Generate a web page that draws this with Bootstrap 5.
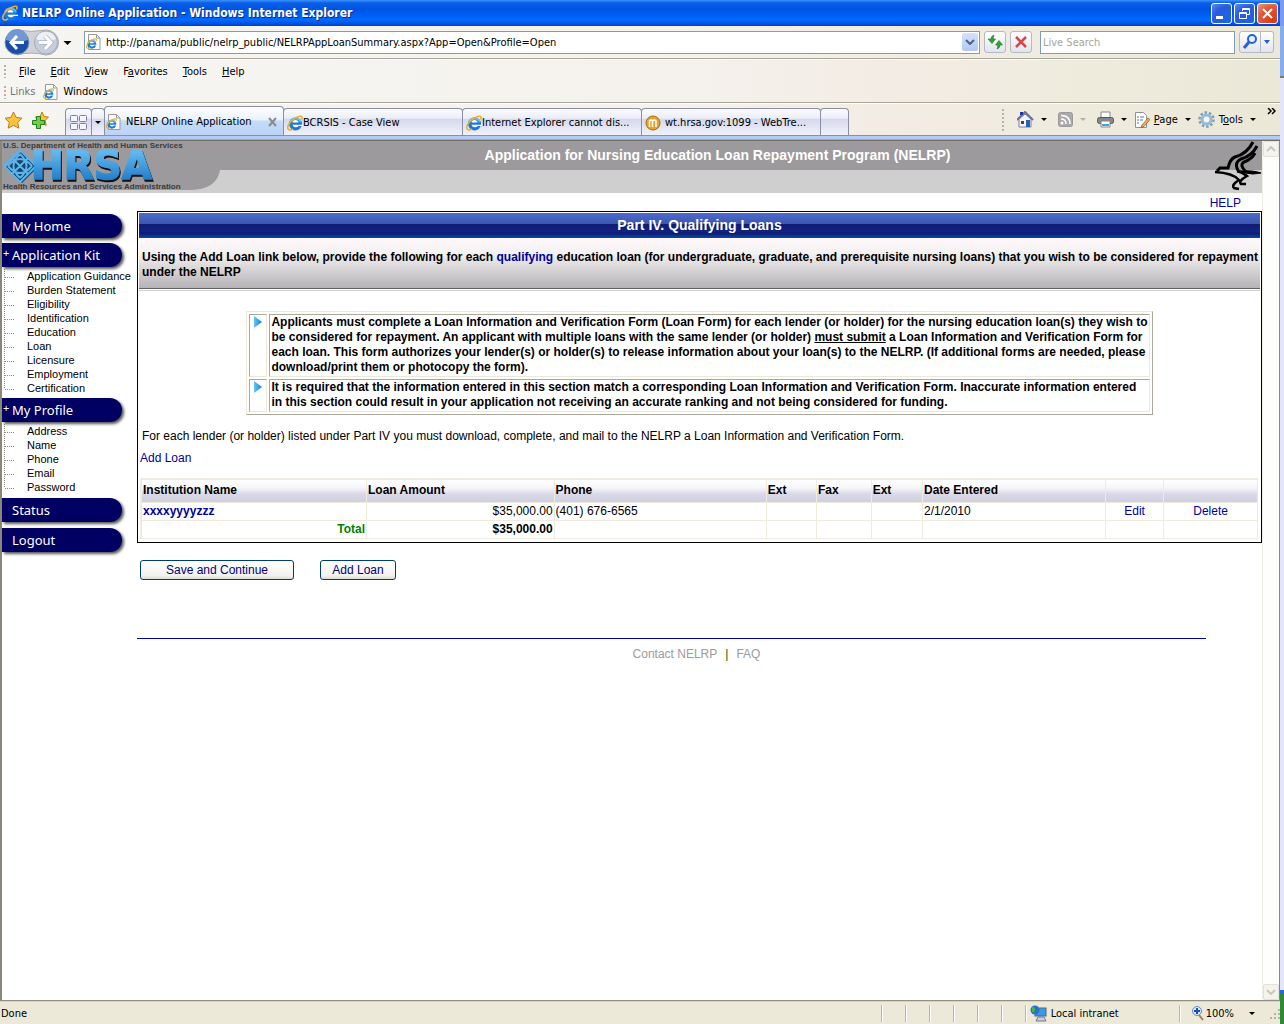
<!DOCTYPE html>
<html lang="en"><head><meta charset="utf-8"><title>NELRP Online Application</title>
<link rel="stylesheet" href="https://cdn.jsdelivr.net/npm/bootstrap@5.3.0/dist/css/bootstrap.min.css">
<style>
:root{--ui:"DejaVu Sans Condensed","DejaVu Sans",Tahoma,sans-serif}
body{font:12px/15px "Liberation Sans",Arial,sans-serif;color:#000;background:#c7d5f5}
a{text-decoration:none;color:#00009c}
button,input{font:inherit}
.win{min-width:0;background:#efebde}
.edge{width:4px;background:linear-gradient(#7d9be8 26px,#84aef0 26px 76px,#7b7b6b 76px 78px,#e4e4fa 78px calc(100% - 34px),#2a66dd calc(100% - 34px) calc(100% - 30px),#2f8a38 calc(100% - 30px))}
.ui{font:11px/14px var(--ui)}
.titlebar{height:26px;background:linear-gradient(#3a93ff 0,#0a5fe8 3px,#0054e3 9px,#0060f8 16px,#006aff 20px,#0050e0 24px,#003dc0);color:#fff;font:bold 12px/26px var(--ui);padding:0 2px;text-shadow:1px 1px #0a2a80}
.wb{width:21px;height:21px;border:1px solid #fff;border-radius:3px;padding:0;background:radial-gradient(circle at 80% 85%,#1d63e8,#2a5bd8 60%,#5b8cf5)}
.wb.red{background:radial-gradient(circle at 80% 85%,#d83c12,#e0583a 60%,#f09a80)}
.wb svg,.ib svg{display:block}
.chrome{background:linear-gradient(90deg,#f6f5f1 0,#f5f2ee 50%,#f3ece4 70%,#eeebdd 85%,#ece8d8)}
.addr{height:33px;border-bottom:1px solid #aaa698;padding:0 6px 0 4px}
.field{height:23px;border:1px solid #7f9db9;background:#fff;border-radius:0;padding:0 1px 0 4px}
.field input{border:0;outline:0;padding:2px 0 0;background:transparent;min-width:0}
.field input::placeholder{color:#a5a59a;opacity:1}
.place{padding-left:1px}
.live{width:195px;padding-left:2px}
.ib{height:22px;border:1px solid #b4b8c8;border-radius:3px;background:linear-gradient(#fff,#e3e4ec);padding:0}
.drop{width:16px;height:18px;border:0;border-radius:2px;background:linear-gradient(#d5e2fd,#b2c7f5);padding:0}
.menus{height:44px;border-bottom:1px solid #aaa698;border-top:1px solid #fff;padding:4px 4px 0}
.menubar{height:15px;margin-bottom:5px}
.menubar span{gap:15px;margin-left:9px}
.menus a,.tools a{color:#000}
.grip{width:2px;height:13px;background:repeating-linear-gradient(#b5b2a6 0 2px,transparent 2px 4px)}
.tabs{height:33px;border-top:1px solid #fff;border-bottom:1px solid #8b8fa8}
.favs{width:66px;gap:9px}
.tabx{height:27px;border:1px solid #8b8fa6;border-bottom:0;border-radius:4px 4px 0 0;background:linear-gradient(#fbfbfe 0,#eceef8 35%,#d6d9ec 40%,#f0f1f9);padding:2px 3px 0;width:180px;margin-left:-1px;color:#000;white-space:nowrap}
.tabx.cur{height:29px;padding-left:1px;background:linear-gradient(#fff 0,#e9f2fd 45%,#c3dcf8 50%,#bcd3f6)}
.tabx.sm{width:29px}.tabx.q{width:27px;padding:0 2px}.tabx.arr{width:14px;padding:0}
.caret{width:0;height:0;border:3px solid transparent;border-top-color:#000;border-bottom:0;flex:none}
.underbar{height:5px;background:linear-gradient(#b5cbf3 0 3px,#aca899 3px 4px,#716f64 4px)}
.tools{gap:7px}
.tools .grip{height:22px;margin-right:6px}
.tools a{margin-left:-3px}
.view{border-left:2px solid #8a8779;background:#fff}
.scroll{width:17px;background:#fefefb;border-left:1px solid #eeede5}
.scroll button{width:16px;height:16px;border:1px solid #e4e2d6;border-radius:2px;background:#f4f3ee;padding:0}
.rim{width:3px;background:#ece9d8;border-right:1px solid #8a8779}
.status{height:24px;border-top:1px solid #918f84;background:#ece9d8;box-shadow:inset 0 1px #d8d4c4;padding:2px 0 0 1px}
.cell{width:24px;height:17px;border-left:1px solid #b9b6a8;box-shadow:inset 1px 0 #fff}
.zone span{width:128px}
.zoomer{padding-left:11px}
.zoomer .caret{margin:0 15px}
.head{height:52px;background:linear-gradient(#9c9a9c 29px,#cecfce 29px)}
.logo{width:218px}
.word{filter:drop-shadow(1px 2px 0 #111)}
.head h1{font:bold 14px/29px "Liberation Sans",Arial,sans-serif;color:#fff;margin:0}
.side{width:135px;padding-top:21px}
.pill{display:block;width:120px;height:24px;margin-bottom:5px;background:#000063;color:#fff;border-radius:0 12px 12px 0;box-shadow:2px 2px 3px #555;font:13px/24px "Noto Sans","Open Sans",sans-serif;padding-left:10px;position:relative}
.pill.end{margin-bottom:6px}
.pill span{position:absolute;left:1px;top:-2px;font-size:11px}
.tree{margin:-3px 0 3px;padding:0;list-style:none;font-size:11px;line-height:14px}
.tree.end{margin-bottom:4px}
.tree a{color:#000;display:block;height:14px;padding-left:25px;white-space:nowrap;background:repeating-linear-gradient(90deg,#8d8a80 0 1px,transparent 1px 2px) 3px 8px/10px 1px no-repeat,repeating-linear-gradient(#8d8a80 0 1px,transparent 1px 2px) 2px 0/1px 14px no-repeat}
.tree li:last-child a{background-size:10px 1px,1px 8px}
.help{height:18px;line-height:18px;padding:1px 21px 0 0}
.panel{border:1px solid #000;padding:1px}
.panel h2{margin:0;height:25px;font:bold 14px/24px "Liberation Sans",Arial,sans-serif;color:#fff;text-align:center;background:linear-gradient(#4b6bd0 0,#3d56ac 11px,#101c73 11px,#122383 19px,#0a1a70 20px,#0e46a8 25px)}
.intro{height:53px;font-weight:700;padding:12px 0 0 3px;background:linear-gradient(#fff9fb 0,#f4f1f3 15px,#b5b3b5 50px,#636163 50px 51px,#fff 51px 52px,#cecfce 52px)}
.notes{max-width:100%;margin:20px auto 14px;border:1px solid #ece9d8;border-right-color:#aca899;border-bottom-color:#aca899;border-collapse:separate;border-spacing:2px;font-weight:700}
.notes td{border:1px solid #aca899;border-right-color:#ece9d8;border-bottom-color:#ece9d8;padding:0 1px 1px;vertical-align:top}
.notes td:first-child{padding:1px 4px}
.notes svg{display:block}
.say{margin:0;padding:0 0 3px 3px}
.addlink{margin:0 0 12px 1px}
.loans{width:calc(100% - 3px);margin:0 0 2px 1px;table-layout:fixed;border:2px solid #efebe0;border-right:1px solid #aca899;border-bottom:1px solid #aca899;border-collapse:collapse}
.loans th{height:23px;background:linear-gradient(#fff 0,#f6f6fa 35%,#d8d8e6 65%,#cfcfe0);padding:0 1px}
.loans td{height:18px;padding:0 1px}
.loans th,.loans td{border:1px solid #efebde;line-height:17px}
.loans .sum{color:#008000;font-weight:700}
.acts{padding:17px 3px 0;gap:26px}
.xp{height:20px;border:1px solid #003c74;border-radius:3px;background:linear-gradient(#fff,#f3f2ee 80%,#dfdcd2);color:#00007b;padding:0;line-height:16px;width:76px}
.xp.wide{width:154px}
.rule{height:1px;margin:58px 56px 0 0;background:#00009c}
.foot{margin-right:56px;padding:8px 0 0 50px;height:30px}
.foot a{color:#9c9a9c}
.foot span{margin:0 8px;color:#006400}
</style></head><body>
<svg width="0" height="0" class="position-absolute"><defs>
<linearGradient id="ig" x1="0" y1="0" x2="0" y2="1"><stop offset="0" stop-color="#5cb8f5"/><stop offset="1" stop-color="#0d5cc0"/></linearGradient>
<linearGradient id="hg" x1="0" y1="0" x2="0" y2="1"><stop offset=".2" stop-color="#62b8ee"/><stop offset=".8" stop-color="#2480cc"/></linearGradient>
<linearGradient id="tg" x1="0" y1="0" x2="1" y2="0"><stop offset="0" stop-color="#66c8ee"/><stop offset="1" stop-color="#0a80e8"/></linearGradient>
<symbol id="ie" viewBox="0 0 16 16"><circle cx="8.500" cy="9" r="6.500" fill="#1b78d8"/><path d="M3 7a6 6 0 0 1 11 0" fill="none" stroke="#62bdf6" stroke-width="2"/><path d="M5.500 7.500a3 2.500 0 0 1 6 0z" fill="#fff"/><path d="M5.500 9.800H16v1.200h-4.300a3.300 2.500 0 0 1-6.200-1.200z" fill="#fff"/><path d="M2 14.800C-1.500 13 3 6 8 3.200S16.500.3 14.600 4.500M2 14.800c1.500.5 3-.3 4-1" fill="none" stroke="#f0b01c" stroke-width="1.600"/></symbol>
<symbol id="doc" viewBox="0 0 16 16"><path d="M2.500.5h8l3.500 3.500v11.500H2.500z" fill="#fff" stroke="#9a9a9a"/><path d="M10.500.5V4H14" fill="none" stroke="#9a9a9a"/><svg x="0" y="4" width="11" height="11"><use href="#ie"/></svg></symbol>
<symbol id="tri" viewBox="0 0 8 12"><path d="M0 0l8 6-8 6z" fill="url(#tg)"/></symbol>
</defs></svg>
<div class="d-flex min-vh-100">
<div class="win flex-grow-1 d-flex flex-column">
<header class="titlebar d-flex align-items-center"><svg width="16" height="16" class="me-1"><use href="#ie"/></svg><span class="flex-grow-1">NELRP Online Application - Windows Internet Explorer</span>
<div class="d-flex" style="gap:2px"><button class="wb" aria-label="Minimize"><svg width="19" height="19"><path d="M4 12h7v3H4z" fill="#fff"/></svg></button><button class="wb" aria-label="Restore"><svg width="19" height="19" fill="none" stroke="#fff"><path d="M7.500 7V4.500h7v6H12M7 5.500h8M4.500 8.500h7v6h-7zM4 9.500h8"/></svg></button><button class="wb red" aria-label="Close"><svg width="19" height="19"><path d="M5 5l9 9M14 5l-9 9" stroke="#fff" stroke-width="2"/></svg></button></div></header>
<div class="chrome ui">
<div class="addr d-flex align-items-center">
<svg width="76" height="30" class="flex-shrink-0"><path d="M13 3Q27 6 42 3A12 12 0 0 1 42 28Q27 24 13 28z" fill="#d0d2d8" stroke="#a5a8b0"/><circle cx="13" cy="15.500" r="12" fill="#174fa8" stroke="#8b94a8"/><path d="M2 13a11 11 0 0 1 22 0Q13 17 2 13" fill="#7397d0"/><path d="M13 9l-6 6.500 6 6.500M8 15.500h12" fill="none" stroke="#fff" stroke-width="3"/><circle cx="42" cy="15.500" r="11.500" fill="#c6cedc" stroke="#a5acb8"/><path d="M32 12a10.500 10.500 0 0 1 20 0Q42 17 32 12" fill="#eceff4"/><path d="M41 9l6 6.500-6 6.500M47 15.500H35" fill="none" stroke="#a9b2c2" stroke-width="4.500"/><path d="M41 9l6 6.500-6 6.500M47 15.500H35" fill="none" stroke="#fff" stroke-width="3"/><path d="M59.500 14h8l-4 4z"/></svg>
<div class="field place d-flex align-items-center flex-grow-1 ms-1"><svg width="16" height="16" class="me-1"><use href="#doc"/></svg><input class="flex-grow-1" aria-label="Address" value="http://panama/public/nelrp_public/NELRPAppLoanSummary.aspx?App=Open&amp;Profile=Open"><button class="drop" aria-label="Show addresses"><svg width="10" height="6" class="d-block mx-auto"><path d="M1 1l4 4 4-4" fill="none" stroke="#4d6185" stroke-width="2"/></svg></button></div>
<button class="ib ms-1" aria-label="Refresh"><svg width="20" height="20" fill="#35a035" stroke="#1d7a20" stroke-width=".6"><path d="M9 3Q6 4 6 7H3l4 4.500L10.500 7H8.300Q8 5 9 3z"/><path d="M12 17Q15 16 15 13h2.500L14 8.500 10.500 13H12.700Q13 15 12 17z"/></svg></button>
<button class="ib ms-1" aria-label="Stop"><svg width="20" height="20"><path d="M5 5l10 10M15 5L5 15" stroke="#d04848" stroke-width="2.500"/></svg></button>
<div class="field live d-flex align-items-center ms-2"><input class="w-100" aria-label="Live Search" placeholder="Live Search"></div>
<div class="d-flex ms-1"><button class="ib rounded-end-0" aria-label="Search"><svg width="20" height="20" fill="none" stroke="#2462d8"><circle cx="12" cy="7" r="4" fill="#e4f0ff" stroke-width="2"/><path d="M9 10l-5 6" stroke-width="3"/></svg></button><button class="ib rounded-start-0 border-start-0" aria-label="Search options"><svg width="12" height="20"><path d="M3 8h6l-3 4z" fill="#1d5fd8"/></svg></button></div>
</div>
<div class="menus"><nav class="menubar d-flex align-items-center"><i class="grip"></i><span class="d-flex ps-1"><a href="#"><u>F</u>ile</a><a href="#"><u>E</u>dit</a><a href="#"><u>V</u>iew</a><a href="#">F<u>a</u>vorites</a><a href="#"><u>T</u>ools</a><a href="#"><u>H</u>elp</a></span></nav>
<div class="d-flex align-items-center"><i class="grip"></i><span class="text-secondary ms-1 me-2">Links</span><svg width="16" height="16" class="me-1"><use href="#doc"/></svg><a href="#">Windows</a></div></div>
<div class="tabs d-flex align-items-end">
<div class="favs d-flex align-items-center h-100 ps-1"><svg width="19" height="18"><path d="M9.500 1l2.600 5.400 5.900.8-4.300 4.100 1.100 5.900-5.300-2.900-5.300 2.900 1.100-5.900L1 7.200l5.900-.8z" fill="#fbc33c" stroke="#c57a14"/></svg><svg width="17" height="18"><path d="M10 1l2 4.500 4.500.5-3.300 3.500 1 5-4.200-2.500-4.200 2.500 1-5L3.500 6 8 5.500z" fill="#fbc33c" stroke="#c57a14"/><path d="M4.500 5.500h4v4h4v4h-4v4h-4v-4h-4v-4h4z" fill="#6cd04a" stroke="#25801c"/></svg></div>
<a class="tabx q d-flex align-items-center justify-content-center" href="#" aria-label="Quick tabs"><svg width="17" height="15" fill="#f4f6fb" stroke="#7a8298"><rect x=".5" y=".5" width="7" height="6" rx="1"/><rect x="9.500" y=".5" width="7" height="6" rx="1"/><rect x=".5" y="8.500" width="7" height="6" rx="1"/><rect x="9.500" y="8.500" width="7" height="6" rx="1"/></svg></a><a class="tabx arr d-flex align-items-center justify-content-center" href="#" aria-label="Tab list"><i class="caret"></i></a>
<a class="tabx cur d-flex align-items-center" href="#"><svg width="16" height="16" class="me-1 flex-shrink-0"><use href="#doc"/></svg><span class="flex-grow-1">NELRP Online Application</span><svg width="16" height="10"><path d="M5 1l7 8M12 1L5 9" stroke="#8a8a8a" stroke-width="2"/></svg></a>
<a class="tabx d-flex align-items-center" href="#"><svg width="16" height="16"><use href="#ie"/></svg><span>BCRSIS - Case View</span></a>
<a class="tabx d-flex align-items-center" href="#"><svg width="16" height="16"><use href="#ie"/></svg><span>Internet Explorer cannot dis...</span></a>
<a class="tabx d-flex align-items-center" href="#"><svg width="16" height="16" class="me-1"><circle cx="8" cy="8" r="7" fill="#e8a32a" stroke="#a86a10"/><path d="M4.500 12V6q2-2 3 0v6M7.500 6q2-2 3.500 0v6" fill="none" stroke="#fff" stroke-width="1.500"/></svg><span>wt.hrsa.gov:1099 - WebTre...</span></a><a class="tabx sm" href="#" aria-label="New tab"></a>
<div class="tools d-flex align-items-center ms-auto h-100 pe-1"><i class="grip"></i>
<svg width="17" height="17"><path d="M2 8v8h12V8L8 3z" fill="#f4f5fa" stroke="#7a80a0"/><path d="M0 9l8-8 8 8" fill="none" stroke="#6a7098" stroke-width="2"/><path d="M3 1h3v3H3z" fill="#2233b0"/><path d="M4 10h3v3H4z" fill="#445"/><path d="M9 9h4v7H9z" fill="#2a62b8"/></svg><i class="caret"></i>
<svg width="15" height="15" class="ms-1"><rect x=".5" y=".5" width="14" height="14" rx="2" fill="#aaa" stroke="#999"/><path d="M3 7q5 0 5 5M3 3.500q9 0 9 8.500" fill="none" stroke="#fff" stroke-width="1.500"/><circle cx="4" cy="11" r="1.500" fill="#fff"/></svg><i class="caret opacity-25"></i>
<svg width="17" height="17" class="ms-1"><path d="M4 1h9v6H4z" fill="#fff" stroke="#888"/><rect x=".5" y="6.500" width="16" height="6" rx="2" fill="#85878c" stroke="#55575c"/><path d="M4 10h9v6H4z" fill="#fff" stroke="#888"/><path d="M5 13h7v2H5z" fill="#38a8d8"/></svg><i class="caret"></i>
<svg width="16" height="16"><path d="M1.500.5h8l3 3v12h-11z" fill="#fff" stroke="#8b90a5"/><path d="M3 5h2M6 5h4M3 8h2M6 8h3M3 11h2" stroke="#5572b8"/><path d="M8 13l6-7 2 1.500-6 7-3 1z" fill="#f0b050" stroke="#805a28" stroke-width=".7"/></svg><a href="#"><u>P</u>age</a><i class="caret"></i>
<svg width="17" height="17"><circle cx="8.500" cy="8.500" r="7" fill="none" stroke="#7e9cb8" stroke-width="2.500" stroke-dasharray="2.500 1.900"/><circle cx="8.500" cy="8.500" r="4.500" fill="#f2f6fa" stroke="#9ab8d2" stroke-width="3"/></svg><a href="#">T<u>o</u>ols</a><i class="caret"></i>
<svg width="9" height="7" class="align-self-start mt-1 ms-1" fill="none" stroke="#000" stroke-width="1.500"><path d="M1 0l3 3-3 3M5 0l3 3-3 3"/></svg></div>
</div></div>
<div class="underbar"></div>
<div class="d-flex flex-grow-1">
<div class="view flex-grow-1">
<div class="head d-flex"><div class="logo"><svg width="218" height="52"><path d="M0 0h218v29q-3 19-29 20H0z" fill="#9c9a9c"/>
<path d="M3 27L20 10l16 16-16 16z" fill="#1b4468"/>
<g fill="none" stroke="#5ab4ee" stroke-width="2.500"><path d="M2 25L18 9l16 16-16 16z" stroke-width="2"/><path d="M10 17l16 16M26 17L10 33M6 25q12-14 24 0M6 25q12 14 24 0M18 13q-13 12 0 24M18 13q13 12 0 24" stroke-width="2"/></g>
<text class="word" x="29" y="38" font-family="DejaVu Sans" font-weight="bold" font-size="39" fill="url(#hg)" stroke="url(#hg)" stroke-width="1.500">HRSA</text>
<g font-family="Liberation Sans" font-weight="bold" font-size="8" fill="#3a3a3a"><text x="1" y="7">U.S. Department of Health and Human Services</text><text x="1" y="48">Health Resources and Services Administration</text></g></svg></div>
<h1 class="flex-grow-1 text-center">Application for Nursing Education Loan Repayment Program (NELRP)</h1>
<svg width="47" height="52" fill="none" stroke="#000" stroke-width="3"><path d="M2 30L5 27 13 27Q15 18 20 16 32 13 38 1"/><path d="M24 31Q18 22 26 18 37 15 42 5"/><path d="M31 31Q24 24 29 21 37 18 40 12"/><path d="M0 31Q18 32 24 39 16 44 19 47L24 48M22 30Q27 31 32 35 23 40 26 43L31 43" stroke-width="2.500"/><path d="M25 30Q38 29 46 32 38 34 30 32z" fill="#000" stroke-width="1"/></svg></div>
<div class="d-flex">
<nav class="side flex-shrink-0">
<a class="pill" href="#">My Home</a><a class="pill" href="#"><span>+</span>Application Kit</a>
<ul class="tree"><li><a href="#">Application Guidance</a></li><li><a href="#">Burden Statement</a></li><li><a href="#">Eligibility</a></li><li><a href="#">Identification</a></li><li><a href="#">Education</a></li><li><a href="#">Loan</a></li><li><a href="#">Licensure</a></li><li><a href="#">Employment</a></li><li><a href="#">Certification</a></li></ul>
<a class="pill" href="#"><span>+</span>My Profile</a>
<ul class="tree end"><li><a href="#">Address</a></li><li><a href="#">Name</a></li><li><a href="#">Phone</a></li><li><a href="#">Email</a></li><li><a href="#">Password</a></li></ul>
<a class="pill end" href="#">Status</a><a class="pill end" href="#">Logout</a></nav>
<main class="flex-grow-1">
<div class="help text-end"><a href="#">HELP</a></div>
<section class="panel"><h2>Part IV. Qualifying Loans</h2>
<div class="intro">Using the Add Loan link below, provide the following for each <a href="#">qualifying</a> education loan (for undergraduate, graduate, and prerequisite nursing loans) that you wish to be considered for repayment under the NELRP</div>
<table class="notes"><tr><td><svg width="8" height="12"><use href="#tri"/></svg></td><td>Applicants must complete a Loan Information and Verification Form (Loan Form) for each lender (or holder) for the nursing education loan(s) they wish to<br>be considered for repayment. An applicant with multiple loans with the same lender (or holder) <u>must submit</u> a Loan Information and Verification Form for<br>each loan. This form authorizes your lender(s) or holder(s) to release information about your loan(s) to the NELRP. (If additional forms are needed, please<br>download/print them or photocopy the form).</td></tr><tr><td><svg width="8" height="12"><use href="#tri"/></svg></td><td>It is required that the information entered in this section match a corresponding Loan Information and Verification Form. Inaccurate information entered<br>in this section could result in your application not receiving an accurate ranking and not being considered for funding.</td></tr></table>
<p class="say">For each lender (or holder) listed under Part IV you must download, complete, and mail to the NELRP a Loan Information and Verification Form.</p>
<p class="addlink pt-1"><a href="#">Add Loan</a></p>
<table class="loans"><colgroup><col style="width:20.2%"><col style="width:16.8%"><col style="width:19%"><col style="width:4.5%"><col style="width:4.9%"><col style="width:4.6%"><col style="width:16.4%"><col style="width:5.2%"><col></colgroup>
<thead><tr><th>Institution Name</th><th>Loan Amount</th><th>Phone</th><th>Ext</th><th>Fax</th><th>Ext</th><th>Date Entered</th><th></th><th></th></tr></thead>
<tbody><tr><td><a href="#" class="fw-bold">xxxxyyyyzzz</a></td><td class="text-end">$35,000.00</td><td>(401) 676-6565</td><td></td><td></td><td></td><td>2/1/2010</td><td class="text-center"><a href="#">Edit</a></td><td class="text-center"><a href="#">Delete</a></td></tr>
<tr><td class="text-end sum">Total</td><td class="text-end fw-bold">$35,000.00</td><td></td><td></td><td></td><td></td><td></td><td></td><td></td></tr></tbody></table></section>
<div class="acts d-flex"><button class="xp wide">Save and Continue</button><button class="xp">Add Loan</button></div>
<div class="rule"></div>
<footer class="foot text-center"><a href="#">Contact NELRP</a><span>|</span><a href="#">FAQ</a></footer>
</main></div></div>
<div class="scroll d-flex flex-column justify-content-between"><button aria-label="Scroll up"><svg width="10" height="6" class="d-block mx-auto"><path d="M1 5l4-4 4 4" fill="none" stroke="#c9c7ba" stroke-width="2"/></svg></button><button aria-label="Scroll down"><svg width="10" height="6" class="d-block mx-auto"><path d="M1 1l4 4 4-4" fill="none" stroke="#c9c7ba" stroke-width="2"/></svg></button></div><div class="rim"></div></div>
<footer class="status ui d-flex align-items-center"><span class="me-auto">Done</span><i class="cell"></i><i class="cell"></i><i class="cell"></i><i class="cell"></i><i class="cell"></i><i class="cell"></i>
<span class="cell zone d-flex align-items-center w-auto ps-1"><svg width="17" height="17" class="me-1"><rect x="5" y="3" width="11" height="8" fill="#3a9ae8" stroke="#567"/><circle cx="5" cy="5" r="4.500" fill="#2a70d0"/><path d="M2 2q4 0 3 3t-3 2z" fill="#4ab840"/><path d="M8 12h6l2 4H6z" fill="#c8d0e4" stroke="#778"/></svg><span>Local intranet</span></span>
<span class="cell zoomer d-flex align-items-center w-auto"><svg width="15" height="15"><path d="M8 9l4 5" stroke="#a08050" stroke-width="2"/><circle cx="6" cy="5" r="4.500" fill="#d5eaff" stroke="#6c8cb8"/><path d="M6 2v6M3 5h6" stroke="#1c50c0" stroke-width="2"/></svg><span>100%</span><i class="caret"></i><svg width="10" height="10" fill="#b5b2a3"><path d="M8 0h2v2H8zM4 4h2v2H4zM8 4h2v2H8zM0 8h2v2H0zM4 8h2v2H4zM8 8h2v2H8z"/></svg></span></footer>
</div><aside class="edge flex-shrink-0"></aside></div>
<script src="https://cdn.jsdelivr.net/npm/bootstrap@5.3.0/dist/js/bootstrap.bundle.min.js"></script>
</body></html>
